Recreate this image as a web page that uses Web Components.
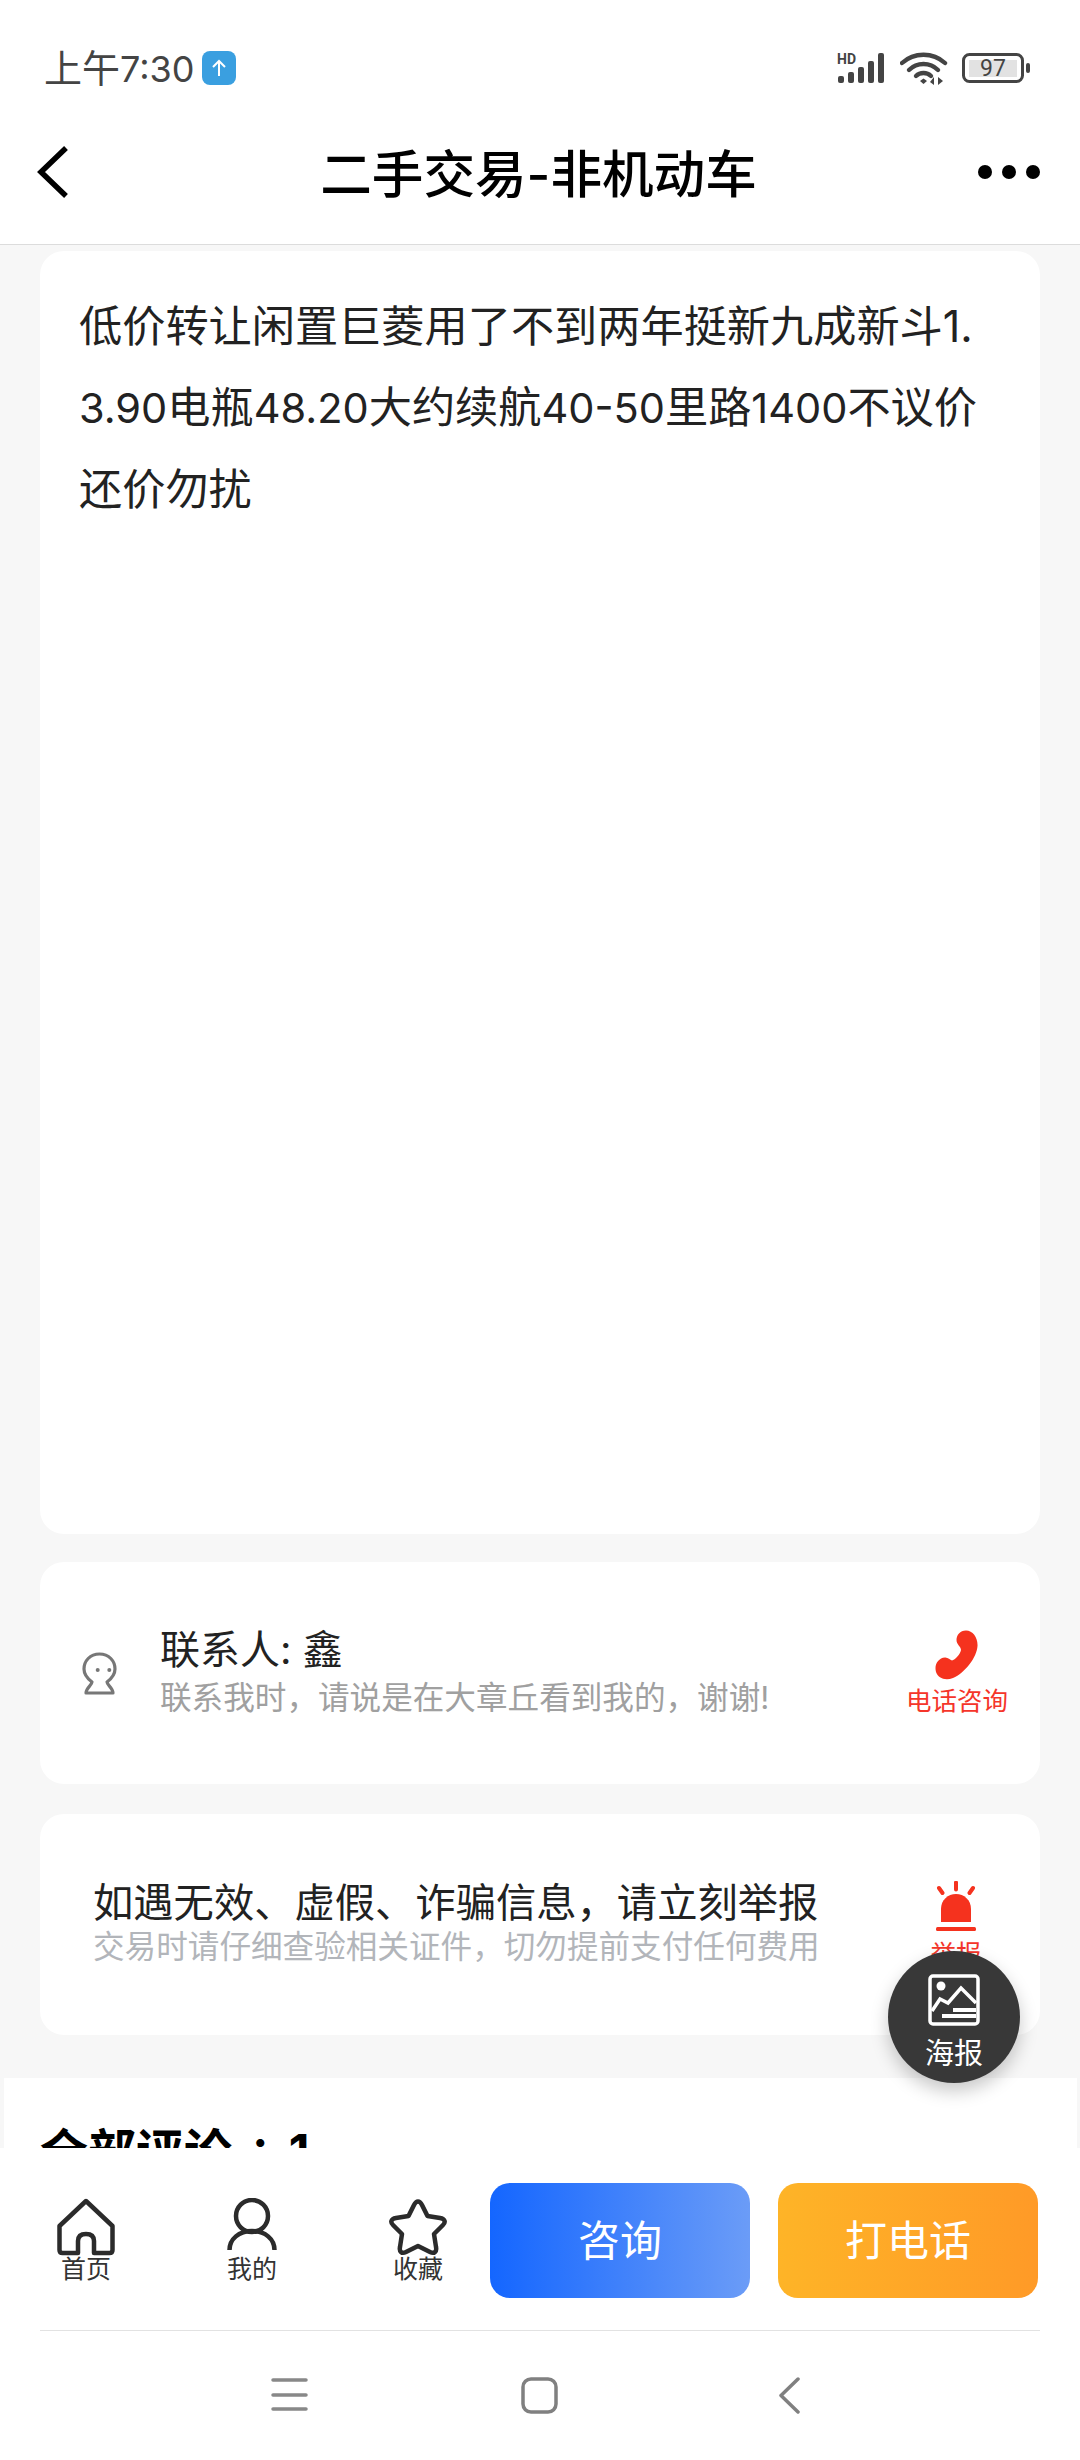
<!DOCTYPE html>
<html lang="zh">
<head>
<meta charset="utf-8">
<title>二手交易-非机动车</title>
<style>
    html, body { margin: 0; padding: 0; background: #fff; }
    body {
        position: relative;
        width: 1080px;
        height: 2460px;
        overflow: hidden;
        display: flex;
        flex-direction: column;
        font-family: Inter, "Noto Sans CJK SC", sans-serif;
    }
</style>
</head>
<body>
<status-bar></status-bar>
<nav-header>二手交易-非机动车</nav-header>
<detail-scroll>
    <text-card>低价转让闲置巨菱用了不到两年挺新九成新斗1.<span>3.90</span>电瓶<span>48.20</span>大约续航<span>40-50</span>里路<span>1400</span>不议价还价勿扰</text-card>
    <contact-card name="联系人: 鑫" hint="联系我时，请说是在大章丘看到我的，谢谢!"></contact-card>
    <report-card title-text="如遇无效、虚假、诈骗信息，请立刻举报" hint="交易时请仔细查验相关证件，切勿提前支付任何费用"></report-card>
    <comment-head>全部评论 : 1</comment-head>
</detail-scroll>
<tool-bar></tool-bar>
<system-nav></system-nav>
<poster-fab></poster-fab>

<script>
class StatusBar extends HTMLElement {
    constructor() {
        super();
        this.attachShadow({ mode: 'open' });
    }

    connectedCallback() {
        this.shadowRoot.innerHTML = `
            <style>
                :host { display: flex; flex: none; height: 120px; align-items: flex-start; padding: 49px 48px 0 44px; box-sizing: border-box; color: #444; }
                .time { font-size: 38px; line-height: 38px; }
                .time b { font-weight: 400; font-size: 36px; }
                .badge { width: 34px; height: 34px; margin: 2px 0 0 7px; border-radius: 8px; background: #3a9fe0; display: flex; align-items: center; justify-content: center; }
                .right { margin-left: auto; display: flex; align-items: flex-start; }
                svg { display: block; }
                .sig { margin-top: 3px; }
                .wifi { margin: 3px 0 0 13px; }
                .bat { margin: 4px 0 0 14px; }
            </style>
            <span class="time">上午<b>7:30</b></span>
            <span class="badge">
                <svg width="16" height="18" viewBox="0 0 16 18" fill="none" stroke="#fff" stroke-width="2"><path d="M8 17V2M2 8l6-6 6 6"/></svg>
            </span>
            <div class="right">
                <svg class="sig" width="50" height="32" viewBox="0 0 50 32" fill="#444">
                    <text x="0" y="12" font-family="Roboto, sans-serif" font-weight="700" font-size="14" fill="#444">HD</text>
                    <rect x="1" y="24" width="6" height="7" rx="2"/>
                    <rect x="11" y="20" width="6" height="11" rx="2"/>
                    <rect x="21" y="15" width="6" height="16" rx="2"/>
                    <rect x="31" y="9" width="6" height="22" rx="2"/>
                    <rect x="41" y="1" width="6" height="30" rx="2"/>
                </svg>
                <svg class="wifi" width="48" height="34" viewBox="0 0 48 34" fill="none" stroke="#444" stroke-width="4.4" stroke-linecap="round">
                    <path d="M2 11C14 0 33 0 45 11"/>
                    <path d="M9 18C17 10 30 10 38 18"/>
                    <path d="M16 24C20 20 27 20 31 24"/>
                    <path d="M20 29l3.5-2.6L27 29l-3.5 3z" fill="#444" stroke="none"/>
                    <path d="M34 33v-8l-4 5zM38 25v8l5-4z" fill="#444" stroke="none"/>
                </svg>
                <svg class="bat" width="70" height="30" viewBox="0 0 70 30">
                    <rect x="1.5" y="1.5" width="59" height="27" rx="6" fill="none" stroke="#444" stroke-width="3"/>
                    <rect x="7" y="7" width="48" height="17" fill="#e2e2e2"/>
                    <rect x="64" y="10" width="4" height="10" rx="2" fill="#444"/>
                    <text x="31" y="23" text-anchor="middle" font-family="Roboto, sans-serif" font-size="23" fill="#444">97</text>
                </svg>
            </div>
        `;
    }
}

class NavHeader extends HTMLElement {
    constructor() {
        super();
        this.attachShadow({ mode: 'open' });
    }

    connectedCallback() {
        this.shadowRoot.innerHTML = `
            <style>
                :host { display: flex; flex: none; height: 125px; box-sizing: border-box; border-bottom: 1px solid #dcdcdc; align-items: center; padding: 0 40px 20px 37px; }
                .side { width: 70px; flex: none; display: flex; }
                .side.end { justify-content: flex-end; }
                .title { flex: 1; text-align: center; font-size: 51.6px; font-weight: 500; color: #000; line-height: 60px; padding-top: 3px; }
                svg { display: block; flex: none; }
                .dots { display: flex; gap: 10px; }
                .dots i { width: 14px; height: 14px; border-radius: 50%; background: #000; }
            </style>
            <div class="side">
                <svg width="32" height="52" viewBox="0 0 32 52" fill="none" stroke="#000" stroke-width="5.5"><path d="M29 2L4 26l25 24"/></svg>
            </div>
            <div class="title"><slot></slot></div>
            <div class="side end"><div class="dots"><i></i><i></i><i></i></div></div>
        `;
    }
}

class DetailScroll extends HTMLElement {
    constructor() {
        super();
        this.attachShadow({ mode: 'open' });
    }

    connectedCallback() {
        this.shadowRoot.innerHTML = `
            <style>
                :host { display: flex; flex: 1; min-height: 0; flex-direction: column; overflow: hidden; background: #f7f7f7; padding-top: 6px; box-sizing: border-box; }
            </style>
            <slot></slot>
        `;
    }
}

class TextCard extends HTMLElement {
    constructor() {
        super();
        this.attachShadow({ mode: 'open' });
    }

    connectedCallback() {
        this.shadowRoot.innerHTML = `
            <style>
                :host { display: block; flex: none; height: 1283px; margin: 0 40px; box-sizing: border-box; padding: 35px 38px 0 39px; background: #fff; border-radius: 24px; font-size: 43.2px; line-height: 81px; color: #222; word-break: break-all; }
                ::slotted(span) { font-size: 41.5px; }
            </style>
            <slot></slot>
        `;
    }
}

class ContactCard extends HTMLElement {
    constructor() {
        super();
        this.attachShadow({ mode: 'open' });
    }

    connectedCallback() {
        const name = this.getAttribute('name') || '';
        const hint = this.getAttribute('hint') || '';

        this.shadowRoot.innerHTML = `
            <style>
                :host { display: flex; flex: none; height: 222px; margin: 28px 40px 0; box-sizing: border-box; padding: 0 32px 0 42px; background: #fff; border-radius: 24px; align-items: center; }
                .who { flex: none; margin: 0 41px 0 0; display: block; }
                .text { flex: 1; min-width: 0; }
                .name { font-size: 40px; line-height: 50px; color: #222; }
                .hint { font-size: 31.6px; line-height: 46px; color: #a0a0a0; }
                .call { flex: none; width: 102px; display: flex; flex-direction: column; align-items: center; color: #f5352a; font-size: 25.5px; line-height: 30px; gap: 4px; }
                .call svg { display: block; }
            </style>
            <svg class="who" width="37" height="43" viewBox="0 0 37 43" fill="none" stroke="#777" stroke-width="3.2" stroke-linejoin="round">
                <path d="M17.500 2C8 2 2 9 2 17C2 23 6 27 10 30C10 33 4 36 4 41H31C31 36 25 33 25 30C29 27 33 23 33 17C33 9 27 2 17.500 2Z"/>
                <circle cx="15.700" cy="18" r="2" fill="#777" stroke="none"/>
                <circle cx="27.300" cy="18" r="2" fill="#777" stroke="none"/>
            </svg>
            <div class="text">
                <div class="name">${name}</div>
                <div class="hint">${hint}</div>
            </div>
            <div class="call">
                <svg width="44" height="52" viewBox="0 0 44 52" fill="#f5321e">
                    <path d="M31 .5C38 .5 43 8 42.500 16C42 27 30 43 18 48C10 51 3 48 1 42C-1 35 3 28 10 27.500C13 27.300 15 30 17 30.500C20 30 25.500 24 26 20C26 16 21.500 15 21.500 10C21.500 5 25 .5 31 .5Z"/>
                </svg>
                <span>电话咨询</span>
            </div>
        `;
    }
}

class ReportCard extends HTMLElement {
    constructor() {
        super();
        this.attachShadow({ mode: 'open' });
    }

    connectedCallback() {
        const title = this.getAttribute('title-text') || '';
        const hint = this.getAttribute('hint') || '';

        this.shadowRoot.innerHTML = `
            <style>
                :host { display: flex; flex: none; height: 221px; margin: 30px 40px 0; box-sizing: border-box; padding: 0 33px 0 53px; background: #fff; border-radius: 24px; align-items: center; }
                .text { flex: 1; min-width: 0; }
                .title { font-size: 40.3px; line-height: 44px; color: #222; white-space: nowrap; }
                .hint { font-size: 31.6px; line-height: 44px; color: #b2b5ba; white-space: nowrap; }
                .act { flex: none; width: 102px; display: flex; flex-direction: column; align-items: center; color: #f5352a; font-size: 25.5px; line-height: 30px; gap: 8px; }
                .act svg { display: block; }
            </style>
            <div class="text">
                <div class="title">${title}</div>
                <div class="hint">${hint}</div>
            </div>
            <div class="act">
                <svg width="40" height="50" viewBox="0 0 40 50" fill="#f5321e">
                    <path d="M5 41V28C5 19 12 13 20 13C28 13 35 19 35 28V41Z"/>
                    <rect x="0" y="46" width="40" height="4" rx="1.500"/>
                    <path d="M20 1.500V8.500M3 7l3.500 5M37 7l-3.500 5" fill="none" stroke="#f5321e" stroke-width="4" stroke-linecap="round"/>
                </svg>
                <span>举报</span>
            </div>
        `;
    }
}

class CommentHead extends HTMLElement {
    constructor() {
        super();
        this.attachShadow({ mode: 'open' });
    }

    connectedCallback() {
        this.shadowRoot.innerHTML = `
            <style>
                :host { display: block; flex: none; height: 200px; margin: 43px 3px 0 4px; box-sizing: border-box; padding: 46px 0 0 36px; background: #fff; font-size: 48px; line-height: 56px; font-weight: 700; color: #000; word-spacing: 9px; }
            </style>
            <slot></slot>
        `;
    }
}

class BarItem extends HTMLElement {
    constructor() {
        super();
        this.attachShadow({ mode: 'open' });
    }

    connectedCallback() {
        this.shadowRoot.innerHTML = `
            <style>
                :host { display: flex; flex-direction: column; align-items: center; width: 100px; color: #333; font-size: 25px; line-height: 26px; }
                ::slotted(svg) { display: block; height: 58px; }
            </style>
            <slot name="icon"></slot>
            <slot></slot>
        `;
    }
}

class ToolBar extends HTMLElement {
    constructor() {
        super();
        this.attachShadow({ mode: 'open' });
    }

    connectedCallback() {
        this.shadowRoot.innerHTML = `
            <style>
                :host { display: flex; flex: none; height: 183px; box-sizing: border-box; background: #fff; padding: 35px 42px 0 36px; position: relative; align-items: flex-start; }
                :host::after { content: ""; position: absolute; left: 40px; right: 40px; bottom: 0; height: 1px; background: #e2e2e2; }
                .items { display: flex; gap: 66px; padding-top: 15px; }
                .btn { height: 115px; width: 260px; box-sizing: border-box; padding-bottom: 6px; border-radius: 20px; color: #fff; font-size: 42px; display: flex; align-items: center; justify-content: center; }
                .ask { margin-left: 22px; background: linear-gradient(90deg, #1466ff, #6b9cf7); }
                .tel { margin-left: 28px; background: linear-gradient(90deg, #feb427, #ff9a27); }
            </style>
            <div class="items">
                <bar-item>
                    <svg slot="icon" width="58" height="58" viewBox="0 0 58 58" fill="none" stroke="#2b2b2b" stroke-width="4.500" stroke-linejoin="round">
                        <path d="M29 3L2.500 28V52Q2.500 55 5.500 55H21V43Q21 36 29 36Q37 36 37 43V55H52.500Q55.500 55 55.500 52V28Z"/>
                    </svg>
                    首页
                </bar-item>
                <bar-item>
                    <svg slot="icon" width="50" height="58" viewBox="0 0 50 58" fill="none" stroke="#2b2b2b" stroke-width="4.500">
                        <circle cx="25" cy="18" r="16"/>
                        <path d="M2.500 52C2.500 41 12 33 25 33C38 33 47.500 41 47.500 52"/>
                    </svg>
                    我的
                </bar-item>
                <bar-item>
                    <svg slot="icon" width="60" height="58" viewBox="0 0 60 58" fill="none" stroke="#2b2b2b" stroke-width="4.500" stroke-linejoin="round">
                        <path d="M30 3.500C32 3.500 33 5 34 7L39.500 18L52 20C57 21 58 24 55 27L46 36L48 49C49 54 46 56 42 54L30 48L18 54C14 56 11 54 12 49L14 36L5 27C2 24 3 21 8 20L20.500 18L26 7C27 5 28 3.500 30 3.500Z"/>
                    </svg>
                    收藏
                </bar-item>
            </div>
            <div class="btn ask">咨询</div>
            <div class="btn tel">打电话</div>
        `;
    }
}

class SystemNav extends HTMLElement {
    constructor() {
        super();
        this.attachShadow({ mode: 'open' });
    }

    connectedCallback() {
        this.shadowRoot.innerHTML = `
            <style>
                :host { display: flex; flex: none; height: 129px; background: #fff; padding: 46px 0 0 271px; box-sizing: border-box; align-items: flex-start; }
                svg { display: block; flex: none; }
                .home { margin-left: 213px; }
                .back { margin-left: 221px; }
            </style>
            <svg width="37" height="37" viewBox="0 0 37 37" stroke="#888" stroke-width="3.500" stroke-linecap="round" fill="none">
                <path d="M2 3H35M2 18H35M2 32H35"/>
            </svg>
            <svg class="home" width="37" height="37" viewBox="0 0 37 37" fill="none" stroke="#808080" stroke-width="3.500">
                <rect x="2" y="2" width="33" height="33" rx="8"/>
            </svg>
            <svg class="back" width="21" height="37" viewBox="0 0 21 37" fill="none" stroke="#808080" stroke-width="3.500" stroke-linecap="round" stroke-linejoin="round">
                <path d="M19 2L2 18.500 19 35"/>
            </svg>
        `;
    }
}

class PosterFab extends HTMLElement {
    constructor() {
        super();
        this.attachShadow({ mode: 'open' });
    }

    connectedCallback() {
        this.shadowRoot.innerHTML = `
            <style>
                :host { position: absolute; left: 888px; top: 1951px; width: 132px; height: 132px; border-radius: 50%; background: #383838; box-shadow: 0 8px 18px rgba(0,0,0,.22); color: #fff; font-size: 29px; line-height: 36px; display: flex; flex-direction: column; align-items: center; padding-top: 23px; box-sizing: border-box; }
                svg { display: block; margin-bottom: 10px; }
            </style>
            <svg width="52" height="52" viewBox="0 0 52 52" fill="none" stroke="#fff" stroke-width="3.500">
                <rect x="2" y="2" width="48" height="48" rx="3"/>
                <circle cx="13" cy="12" r="4.500" fill="#fff" stroke="none"/>
                <path d="M4 37l8-12 8 4L33 14l15 15"/>
                <path d="M25 36H48M14 42H48" stroke-width="4"/>
            </svg>
            <span>海报</span>
        `;
    }
}

customElements.define('status-bar', StatusBar);
customElements.define('nav-header', NavHeader);
customElements.define('detail-scroll', DetailScroll);
customElements.define('text-card', TextCard);
customElements.define('contact-card', ContactCard);
customElements.define('report-card', ReportCard);
customElements.define('comment-head', CommentHead);
customElements.define('bar-item', BarItem);
customElements.define('tool-bar', ToolBar);
customElements.define('system-nav', SystemNav);
customElements.define('poster-fab', PosterFab);
</script>
</body>
</html>
